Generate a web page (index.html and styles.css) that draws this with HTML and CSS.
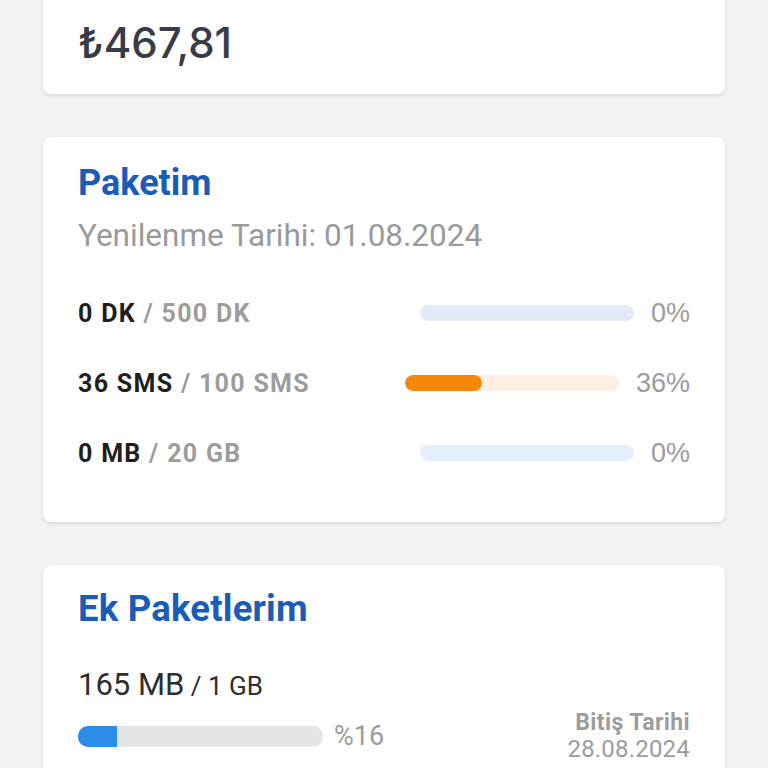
FILE: index.html
```html
<!DOCTYPE html>
<html lang="tr">
<head>
<meta charset="utf-8">
<link rel="stylesheet" href="styles.css">
</head>
<body>
<main class="page">
  <section class="card card-balance">
    <div class="amount">₺467,81</div>
  </section>

  <section class="card card-package">
    <h2 class="card-title">Paketim</h2>
    <div class="renew">Yenilenme Tarihi: 01.08.2024</div>
    <div class="usage-list">
      <div class="usage-row">
        <div class="usage-label"><span class="used">0 DK</span><span class="total"> / 500 DK</span></div>
        <div class="track track-blue"><div class="fill fill-orange" style="width:0%"></div></div>
        <div class="pct">0%</div>
      </div>
      <div class="usage-row">
        <div class="usage-label"><span class="used">36 SMS</span><span class="total"> / 100 SMS</span></div>
        <div class="track track-orange"><div class="fill fill-orange" style="width:36%"></div></div>
        <div class="pct">36%</div>
      </div>
      <div class="usage-row">
        <div class="usage-label"><span class="used">0 MB</span><span class="total"> / 20 GB</span></div>
        <div class="track track-lightblue"><div class="fill fill-orange" style="width:0%"></div></div>
        <div class="pct">0%</div>
      </div>
    </div>
  </section>

  <section class="card card-extra">
    <h2 class="card-title">Ek Paketlerim</h2>
    <div class="extra-grid">
      <div class="extra-amount"><span class="big">165 MB</span><span class="small"> / 1 GB</span></div>
      <div class="extra-bar-row">
        <div class="xtrack"><div class="xfill" style="width:16%"></div></div>
        <div class="xpct">%16</div>
      </div>
      <div class="extra-end">
        <div class="end-label">Bitiş Tarihi</div>
        <div class="end-date">28.08.2024</div>
      </div>
    </div>
  </section>
</main>
</body>
</html>
```

FILE: styles.css
```css
* { box-sizing: border-box; }
html, body { margin: 0; padding: 0; }
body {
  background: #f3f3f3;
  font-family: Roboto, "Noto Sans", "DejaVu Sans", sans-serif;
  height: 768px;
  overflow: hidden;
}
.page {
  padding: 0 43px;
  display: flex;
  flex-direction: column;
  gap: 43px;
  margin-top: -30px;
}
.card {
  background: #ffffff;
  border-radius: 8px;
  box-shadow: 0 2px 4px rgba(0,0,0,0.10), 0 0 2px rgba(0,0,0,0.04);
  padding: 0 35px;
}
.card-balance {
  height: 124px;
  padding-top: 48px;
}
.amount {
  font-family: Inter, Roboto, sans-serif;
  font-size: 42px;
  line-height: 50px;
  color: #3a3a48;
  font-weight: 500;
}
.card-title {
  margin: 0;
  font-size: 36px;
  line-height: 40px;
  font-weight: 700;
  color: #1a5cb6;
}
.card-extra .card-title { font-size: 36.5px; letter-spacing: 0.2px; }
.card-package {
  padding-top: 26px;
  padding-bottom: 34px;
}
.renew {
  margin-top: 13px;
  font-size: 31.5px;
  line-height: 40px;
  color: #9a9a9a;
}
.usage-list {
  margin-top: 22px;
  display: flex;
  flex-direction: column;
}
.usage-row {
  height: 70px;
  display: flex;
  align-items: center;
}
.usage-label {
  flex: 1;
  font-size: 25px;
  font-weight: 700;
  letter-spacing: 1.3px;
}
.used { color: #1e1e1e; }
.total { color: #9c9c9c; }
.track {
  width: 214px;
  height: 16px;
  border-radius: 8px;
  overflow: hidden;
}
.track-blue { background: #e3ebf8; }
.track-orange { background: #fdf0e0; }
.track-lightblue { background: #e4effb; }
.fill { height: 100%; border-radius: 8px; }
.fill-orange { background: #f4870a; }
.pct {
  margin-left: 17px;
  font-size: 27px;
  color: #9c9c9c;
  font-family: "Liberation Sans", Arial, sans-serif;
}
.card-extra {
  padding-top: 24px;
  padding-bottom: 30px;
}
.extra-grid {
  margin-top: 36px;
  display: grid;
  grid-template-columns: 1fr auto;
  align-items: center;
}
.extra-amount {
  grid-column: 1 / 3;
  line-height: 40px;
  color: #2e2e2e;
}
.extra-amount .big { font-size: 31px; }
.extra-amount .small { font-size: 26px; }
.extra-bar-row {
  display: flex;
  align-items: center;
  height: 30px;
}
.xtrack {
  width: 245px;
  height: 21px;
  border-radius: 10px;
  background: #e5e5e5;
  overflow: hidden;
}
.xfill {
  height: 100%;
  background: #2a8de7;
}
.xpct {
  margin-left: 11px;
  font-size: 27px;
  color: #9c9c9c;
}
.extra-end {
  text-align: right;
  line-height: 26px;
  color: #9c9c9c;
}
.end-label { font-size: 23px; font-weight: 700; letter-spacing: 0.4px; }
.end-date { font-size: 24px; letter-spacing: 0.2px; }
```
